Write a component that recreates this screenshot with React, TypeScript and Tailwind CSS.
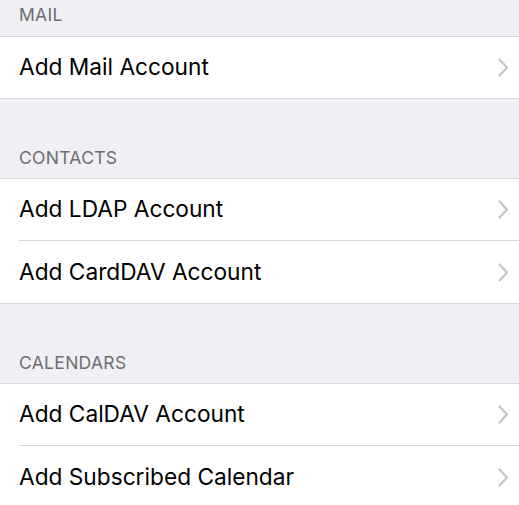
const sections = [
  { title: "MAIL", items: ["Add Mail Account"], first: true },
  { title: "CONTACTS", items: ["Add LDAP Account", "Add CardDAV Account"] },
  { title: "CALENDARS", items: ["Add CalDAV Account", "Add Subscribed Calendar"] },
];

function Chevron() {
  return (
    <svg width="11" height="19" viewBox="0 0 11 19" className="shrink-0">
      <path d="M1.5 1.5 L9 9.5 L1.5 17.5" fill="none" stroke="#c4c4c9" strokeWidth="2.2" strokeLinecap="round" strokeLinejoin="round" />
    </svg>
  );
}

export default function App() {
  return (
    <div
      className="w-[519px] h-[505px] overflow-hidden bg-[#efeff4]"
      style={{ fontFamily: '"Inter", "Liberation Sans", sans-serif' }}
    >
      {sections.map((s) => (
        <div key={s.title}>
          {/* section header */}
          <div className={`${s.first ? "h-[36px] pb-[11px]" : "h-[79px] pb-[10px]"} flex items-end px-[19px]`}>
            <span className="text-[17.5px] leading-[20px] text-[#6d6d72] tracking-[0.3px]">{s.title}</span>
          </div>
          <div className="bg-white border-y border-[#d8d8dc]">
            {s.items.map((item, i) => (
              <div key={item} className={i > 0 ? "pl-[19px]" : ""}>
                <div className={`flex items-center justify-between pr-[10px] ${i > 0 ? "border-t border-[#d8d8dc] h-[63px]" : "pl-[19px] h-[61px]"}`}>
                  <span className="text-[22.7px] text-black">{item}</span>
                  <Chevron />
                </div>
              </div>
            ))}
          </div>
        </div>
      ))}
    </div>
  );
}
